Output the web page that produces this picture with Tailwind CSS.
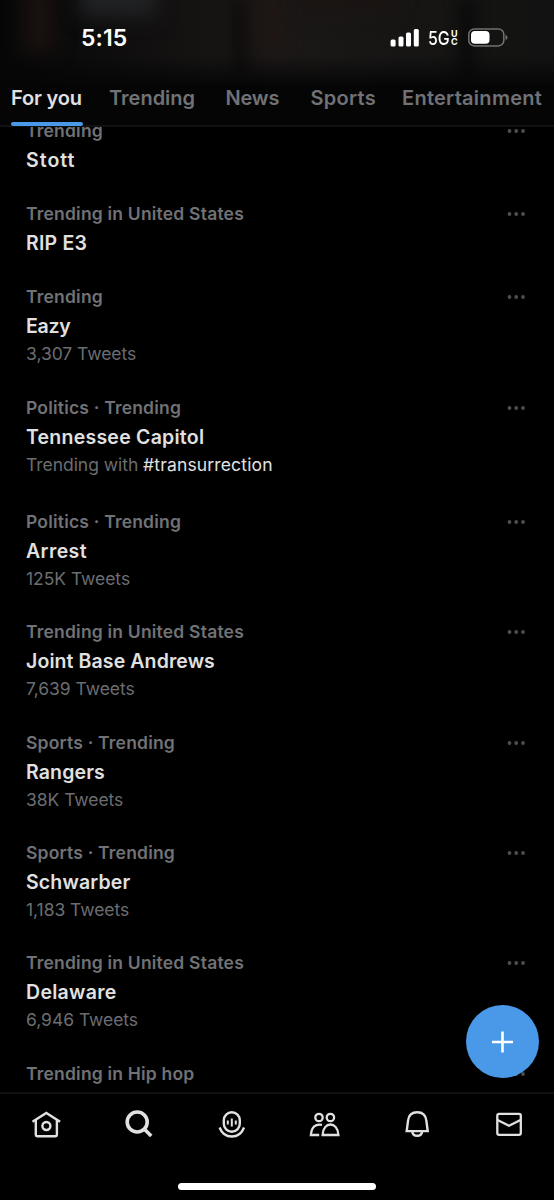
<!DOCTYPE html>
<html lang="en">
<head>
<meta charset="utf-8">
<title>Explore</title>
<script src="https://cdn.jsdelivr.net/npm/@tailwindcss/browser@4"></script>
</head>
<body class="bg-black">
<div class="relative w-[554px] h-[1200px] overflow-hidden bg-black flex flex-col font-['Inter',sans-serif] text-[#e1e1e1] whitespace-nowrap">
  <header class="relative z-10 h-[127px] shrink-0 bg-[#050506] border-b-2 border-[#111112] flex flex-col">
    <div class="absolute inset-x-0 top-0 h-[84px] bg-linear-to-r from-[#070707] via-[#1b1817] to-[#111211]"></div>
    <div class="absolute left-[24px] top-[-12px] w-[30px] h-[64px] bg-[#1a1210] blur-[10px]"></div>
    <div class="absolute left-[80px] top-[-20px] w-[76px] h-[36px] bg-[#222326] blur-[10px]"></div>
    <div class="absolute left-[233px] top-0 w-[16px] h-[80px] bg-[#0f0d0c] blur-[7px]"></div>
    <div class="absolute left-[256px] top-[-8px] w-[26px] h-[58px] bg-[#1f1613] blur-[10px]"></div>
    <div class="absolute left-[300px] top-[-18px] w-[96px] h-[28px] bg-[#1c1312] blur-[10px]"></div>
    <div class="absolute left-[458px] top-0 w-[18px] h-[80px] bg-[#0b0b0b] blur-[7px]"></div>
    <div class="absolute inset-x-0 top-[56px] h-[32px] bg-linear-to-b from-transparent to-[#050506]"></div>
    <div class="relative h-[76px] pl-[81px] flex items-center">
      <div class="text-[23px] font-semibold text-white tracking-[0.1px] w-[309px]">5:15</div>
      <svg class="w-[30px] h-[20px]" viewBox="0 0 30 20" fill="#fff"><rect x=".6" y="11.500" width="5" height="7" rx="1.500"/><rect x="8.500" y="8.500" width="5" height="10" rx="1.500"/><rect x="16" y="4.500" width="5" height="14" rx="1.500"/><rect x="23.800" y="1" width="5" height="17.500" rx="1.500"/></svg>
      <div class="ml-[8px] w-[32px] flex items-center text-white text-[19px] font-medium"><span class="inline-block origin-left scale-x-[.84] w-[23px] relative top-[1px]">5G</span><span class="flex flex-col text-[9px] leading-[8px] font-bold"><span>U</span><span>C</span></span></div>
      <svg class="ml-[8px] w-[40px] h-[20px]" viewBox="0 0 40 20"><rect x=".8" y=".9" width="35" height="17" rx="5.500" fill="none" stroke="#747270" stroke-width="1.500"/><rect x="3" y="3.100" width="18.500" height="12.600" rx="3.800" fill="#fff"/><path d="M37.500 6.500Q41.500 9.400 37.500 12.300z" fill="#747270"/></svg>
    </div>
    <nav class="relative h-[49px] flex text-[20px] leading-[44px] font-semibold text-[#707276]">
      <div class="ml-[11px] w-[72px] h-[50px] text-[#e1e1e1] relative tracking-[-0.2px]">For you<span class="absolute left-0 bottom-0 w-[72px] h-[4px] rounded-full bg-[#4a99e9]"></span></div>
      <div class="ml-[26px] w-[116.500px]">Trending</div>
      <div class="w-[85px] tracking-[-0.2px]">News</div>
      <div class="w-[91.500px] tracking-[0.27px]">Sports</div>
      <div class="tracking-[0.27px]">Entertainment</div>
    </nav>
  </header>

  <main id="list" class="-mt-[10px] pl-[26px] pr-[29px] h-[976px] overflow-hidden"></main>

  <template id="row">
    <section class="flex justify-between">
      <div>
        <div class="text-[17.500px] leading-[28px] tracking-[0.2px] font-semibold text-[#707276]" data-label></div>
        <div class="text-[19.500px] leading-[30px] font-semibold" data-name></div>
        <div class="text-[17.500px] leading-[26px] tracking-[-0.04px] text-[#6b6d71]" data-sub></div>
      </div>
      <svg class="w-[18px] h-[28px]" viewBox="0 0 18 28" fill="#4d4e51"><circle cx="2.500" cy="14" r="1.900"/><circle cx="9.200" cy="14" r="1.900"/><circle cx="16" cy="14" r="1.900"/></svg>
    </section>
  </template>

  <footer class="relative h-[107px] shrink-0 border-t-2 border-[#111112] bg-black -mt-px">
    <div class="h-[61px] pl-[30px] pr-[29px] flex items-center justify-between text-[#e1e1e1]">
      <svg class="w-[32px] h-[32px]" viewBox="0 0 32 32" fill="none" stroke="currentColor" stroke-width="2.400"><path d="M2.500 12.800 16.300 4l13.800 8.800"/><path d="M5.800 11v14.500q0 1.800 1.800 1.800h17.500q1.800 0 1.800-1.800V11"/><circle cx="16.400" cy="17" r="4"/></svg>
      <svg class="w-[32px] h-[32px]" viewBox="0 0 32 32" fill="none" stroke="currentColor" stroke-width="3.600"><circle cx="14.200" cy="13" r="10"/><path d="m21.200 20 7 7"/></svg>
      <svg class="w-[32px] h-[32px]" viewBox="-0.8 0 32 32" fill="none" stroke="currentColor" stroke-width="2.400"><rect x="8" y="3.200" width="16" height="19.500" rx="8"/><path d="M3.800 18.500C6 24.500 10.500 27.500 16 27.500s10-3 12.200-9"/><path stroke-width="2" d="M12 11.500v4M16 9.500v8M20 11.500v4"/></svg>
      <svg class="w-[32px] h-[32px]" viewBox="0 0 32 32" fill="none" stroke="currentColor" stroke-width="2.300"><circle cx="11" cy="8.500" r="3.700"/><circle cx="22.400" cy="8.500" r="3.700"/><path d="M14 15.800C7.500 14.500 3.500 18 2.900 26h8.300M14.600 26c.5-14 15.200-14 15.800 0z"/></svg>
      <svg class="w-[32px] h-[32px]" viewBox="-0.500 0.700 32 32" fill="none" stroke="currentColor" stroke-width="2.400"><path d="M6.200 22.800 7.500 12.500C8.100 7 11.500 4 16.700 4s8.600 3 9.200 8.500l1.300 10.300zM11.700 23c.8 6 9.200 6 10 0"/></svg>
      <svg class="w-[32px] h-[32px]" viewBox="0 0.500 32 32" fill="none" stroke="currentColor" stroke-width="2.300"><rect x="4.300" y="5.300" width="23.500" height="21" rx="1.800"/><path d="M4.500 11.500 16 17.300l11.500-5.800"/></svg>
    </div>
    <div class="absolute left-[178px] top-[89px] w-[198px] h-[6.500px] rounded-full bg-white"></div>
  </footer>
  <button class="absolute left-[466px] top-[1005px] w-[73px] h-[73px] rounded-full bg-[#4a99e9] flex items-center justify-center">
    <svg class="w-[22px] h-[22px]" viewBox="0 0 22 22" stroke="#fff" stroke-width="2.600"><path d="M10.500 .5v21M0 11h21"/></svg>
  </button>
</div>
<script>
// label, name, detail, row height, name letter spacing
const rows = [
  ["Trending","Stott","",83.2,1],
  ["Trending in United States","RIP E3","",83.3,0.2],
  ["Trending","Eazy","3,307 Tweets",110.4,-0.3],
  ["Politics · Trending","Tennessee Capitol","Trending with |#transurrection",114.1,0.24],
  ["Politics · Trending","Arrest","125K Tweets",110.3,0.4],
  ["Trending in United States","Joint Base Andrews","7,639 Tweets",110.3,0.1],
  ["Sports · Trending","Rangers","38K Tweets",110.3,0.15],
  ["Sports · Trending","Schwarber","1,183 Tweets",110.3,0.15],
  ["Trending in United States","Delaware","6,946 Tweets",110.5,0.3],
  ["Trending in Hip hop","","",60,0]
];
for (const [label, name, sub, h, spacing] of rows) {
  const n = document.getElementById("row").content.cloneNode(true);
  n.querySelector("section").style.height = h + "px";
  n.querySelector("[data-label]").textContent = label;
  const title = n.querySelector("[data-name]");
  title.textContent = name;
  title.style.letterSpacing = spacing + "px";
  const s = n.querySelector("[data-sub]"), [a, b] = sub.split("|");
  s.textContent = a;
  if (b) { const t = document.createElement("span"); t.className = "text-[#e1e1e1] tracking-[0.15px]"; t.textContent = b; s.append(t); }
  document.getElementById("list").append(n);
}
</script>
</body>
</html>
